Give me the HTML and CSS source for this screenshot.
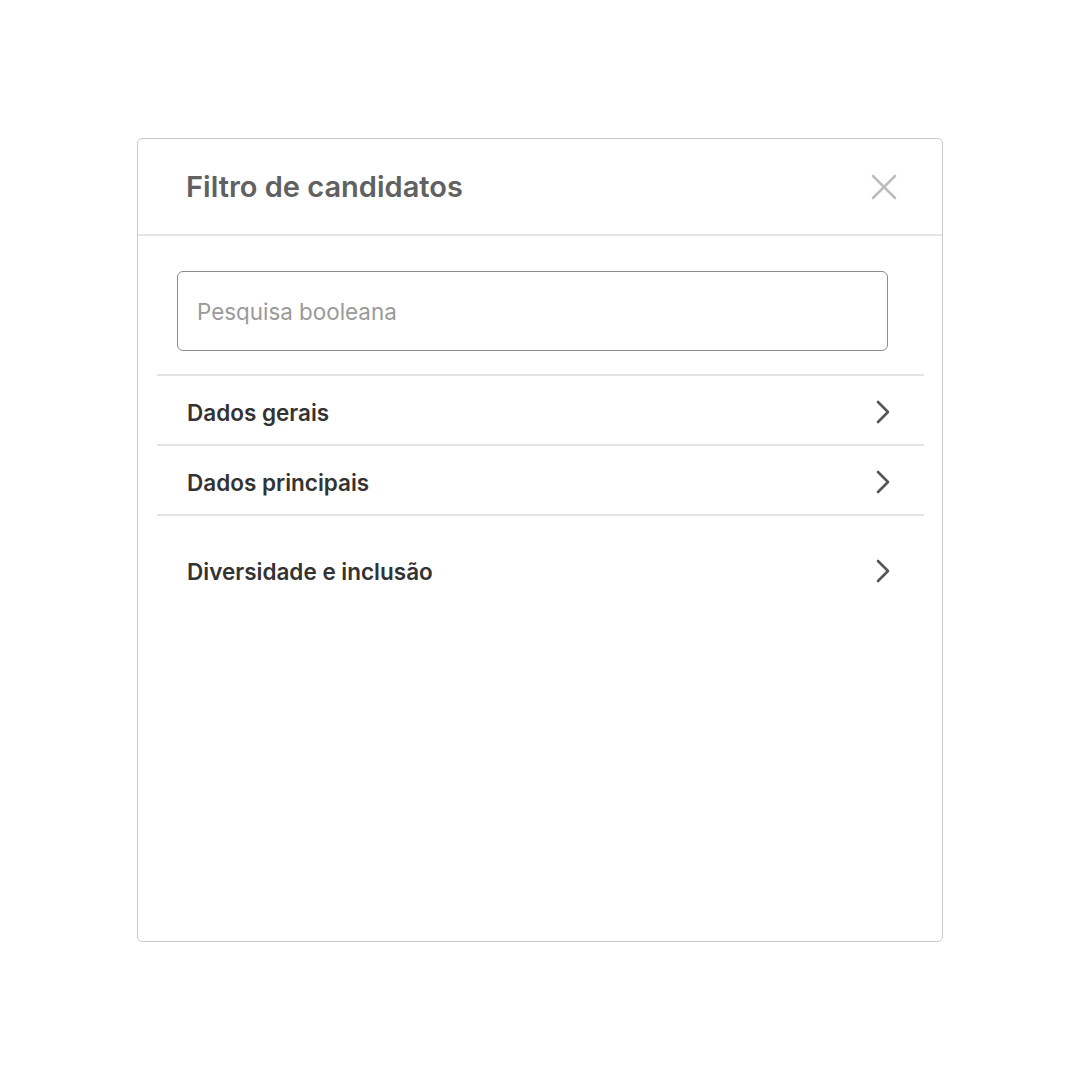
FILE: index.html
```html
<!DOCTYPE html>
<html lang="pt">
<head>
<meta charset="utf-8">
<title>Filtro de candidatos</title>
<link rel="stylesheet" href="styles.css">
</head>
<body>
<div class="panel">
  <div class="header">
    <h1 class="title">Filtro de candidatos</h1>
    <button class="close" aria-label="Fechar">
      <svg width="26" height="26" viewBox="0 0 26 26"><path d="M2 2 L24 24 M24 2 L2 24" stroke="#bdbdbd" stroke-width="2.6" stroke-linecap="round" fill="none"/></svg>
    </button>
  </div>
  <div class="body">
    <div class="search-wrap">
      <input class="search" type="text" placeholder="Pesquisa booleana">
    </div>
    <div class="list">
      <div class="row bordered">
        <span class="label">Dados gerais</span>
        <svg class="chev" width="16" height="24" viewBox="0 0 16 24"><path d="M3 2 L13 12 L3 22" stroke="#555" stroke-width="2.6" fill="none" stroke-linecap="round" stroke-linejoin="round"/></svg>
      </div>
      <div class="row bordered">
        <span class="label">Dados principais</span>
        <svg class="chev" width="16" height="24" viewBox="0 0 16 24"><path d="M3 2 L13 12 L3 22" stroke="#555" stroke-width="2.6" fill="none" stroke-linecap="round" stroke-linejoin="round"/></svg>
      </div>
      <div class="row last">
        <span class="label">Diversidade e inclusão</span>
        <svg class="chev" width="16" height="24" viewBox="0 0 16 24"><path d="M3 2 L13 12 L3 22" stroke="#555" stroke-width="2.6" fill="none" stroke-linecap="round" stroke-linejoin="round"/></svg>
      </div>
    </div>
  </div>
</div>
</body>
</html>
```

FILE: styles.css
```css
* { box-sizing: border-box; }
html, body { margin: 0; padding: 0; background: #fff; }
body {
  font-family: Inter, "Noto Sans", "Liberation Sans", sans-serif;
  padding: 138px 0 0 137px;
}
.panel {
  width: 806px;
  height: 804px;
  border: 1.5px solid #cacaca;
  border-radius: 5px;
  background: #fff;
}
.header {
  height: 97px;
  border-bottom: 2px solid #e4e4e4;
  display: flex;
  align-items: center;
  justify-content: space-between;
  padding: 0 45px 0 48px;
}
.title {
  margin: 0;
  font-size: 29px;
  font-weight: 600;
  color: #616161;
}
.close {
  background: none;
  border: 0;
  padding: 0;
  width: 26px;
  height: 26px;
  display: flex;
}
.body {
  padding: 35px 18px 0 19px;
}
.search-wrap {
  padding: 0 36px 0 20px;
  margin-bottom: 23px;
}
.search {
  width: 100%;
  height: 80px;
  border: 1.5px solid #8c8c8c;
  border-radius: 6px;
  padding: 0 19px;
  font-family: Inter, "Noto Sans", "Liberation Sans", sans-serif;
  font-size: 22.4px;
  color: #333;
  outline: none;
}
.search::placeholder { color: #9a9a9a; }
.list {
  border-top: 2px solid #e4e4e4;
}
.row {
  height: 70px;
  display: flex;
  align-items: center;
  justify-content: space-between;
  padding: 4px 33px 0 30px;
}
.row.bordered { border-bottom: 2px solid #e4e4e4; }
.row.last { height: 110px; padding-top: 0; }
.label {
  font-size: 22.5px;
  font-weight: 600;
  color: #333;
}
.chev { display: block; }
```
